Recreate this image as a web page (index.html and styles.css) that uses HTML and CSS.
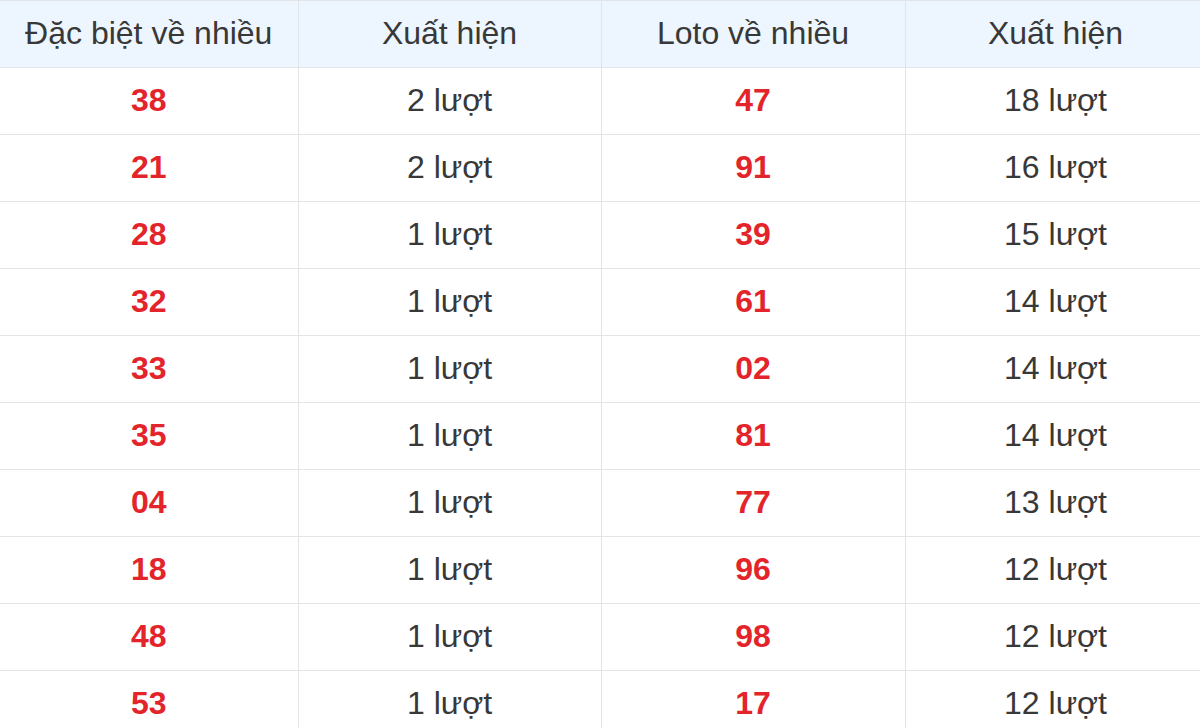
FILE: index.html
```html
<!DOCTYPE html>
<html lang="vi">
<head>
<meta charset="utf-8">
<link rel="stylesheet" href="styles.css">
</head>
<body>
<table class="stats">
  <colgroup>
    <col class="c1"><col class="c2"><col class="c3"><col class="c4">
  </colgroup>
  <thead>
    <tr><th>Đặc biệt về nhiều</th><th>Xuất hiện</th><th>Loto về nhiều</th><th>Xuất hiện</th></tr>
  </thead>
  <tbody>
    <tr><td class="num">38</td><td>2 lượt</td><td class="num">47</td><td>18 lượt</td></tr>
    <tr><td class="num">21</td><td>2 lượt</td><td class="num">91</td><td>16 lượt</td></tr>
    <tr><td class="num">28</td><td>1 lượt</td><td class="num">39</td><td>15 lượt</td></tr>
    <tr><td class="num">32</td><td>1 lượt</td><td class="num">61</td><td>14 lượt</td></tr>
    <tr><td class="num">33</td><td>1 lượt</td><td class="num">02</td><td>14 lượt</td></tr>
    <tr><td class="num">35</td><td>1 lượt</td><td class="num">81</td><td>14 lượt</td></tr>
    <tr><td class="num">04</td><td>1 lượt</td><td class="num">77</td><td>13 lượt</td></tr>
    <tr><td class="num">18</td><td>1 lượt</td><td class="num">96</td><td>12 lượt</td></tr>
    <tr><td class="num">48</td><td>1 lượt</td><td class="num">98</td><td>12 lượt</td></tr>
    <tr><td class="num">53</td><td>1 lượt</td><td class="num">17</td><td>12 lượt</td></tr>
  </tbody>
</table>
</body>
</html>
```
FILE: styles.css
```css
html, body {
  margin: 0;
  padding: 0;
  background: #fff;
  overflow: hidden;
}
body {
  font-family: "Liberation Sans", Arial, sans-serif;
  color: #333;
}
.stats {
  border-collapse: collapse;
  table-layout: fixed;
  width: 1206px;
  font-size: 32px;
  line-height: 1;
}
.c1 { width: 298px; }
.c2 { width: 303px; }
.c3 { width: 304px; }
.c4 { width: 301px; }
.stats th,
.stats td {
  height: 67px;
  padding: 0 0 3px;
  box-sizing: border-box;
  text-align: center;
  vertical-align: middle;
  border: 1px solid #e2e4e8;
  font-weight: normal;
}
.stats thead th {
  background: #edf5fe;
  color: #383838;
}
.stats tbody td { color: #383838; }
.stats tr > :first-child { border-left: none; }
.stats tbody .num {
  color: #e3242b;
  font-weight: bold;
}
```
